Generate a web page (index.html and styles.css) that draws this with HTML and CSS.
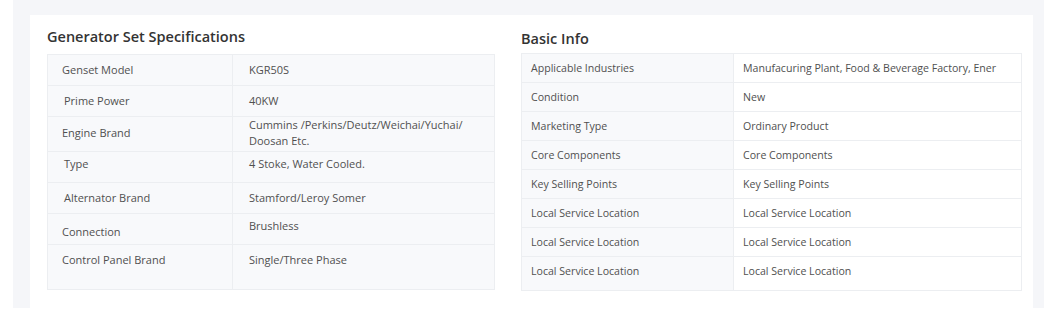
FILE: index.html
```html
<!DOCTYPE html>
<html lang="en">
<head>
    <meta charset="UTF-8">
    <meta name="viewport" content="width=device-width, initial-scale=1.0">
    <title>Product Details</title>
    <link rel="stylesheet" href="styles.css">
</head>
<body>
    <div class="page">
        <div class="card">
            <section class="specs">
                <h2>Generator Set Specifications</h2>
                <table class="spec-table">
                    <colgroup>
                        <col class="col-label">
                        <col>
                    </colgroup>
                    <tr><td>Genset Model</td><td>KGR50S</td></tr>
                    <tr><td class="nudge">Prime Power</td><td>40KW</td></tr>
                    <tr class="multi"><td>Engine Brand</td><td>Cummins /Perkins/Deutz/Weichai/Yuchai/<br>Doosan Etc.</td></tr>
                    <tr class="up"><td class="nudge">Type</td><td>4 Stoke, Water Cooled.</td></tr>
                    <tr><td class="nudge">Alternator Brand</td><td>Stamford/Leroy Somer</td></tr>
                    <tr class="split"><td class="down">Connection</td><td class="up-cell">Brushless</td></tr>
                    <tr class="last"><td>Control Panel Brand</td><td>Single/Three Phase</td></tr>
                </table>
            </section>

            <section class="basic">
                <h2>Basic Info</h2>
                <table class="info-table">
                    <colgroup>
                        <col class="col-label">
                        <col>
                    </colgroup>
                    <tr><td>Applicable Industries</td><td>Manufacuring Plant, Food &amp; Beverage Factory, Ener</td></tr>
                    <tr><td>Condition</td><td>New</td></tr>
                    <tr><td>Marketing Type</td><td>Ordinary Product</td></tr>
                    <tr><td>Core Components</td><td>Core Components</td></tr>
                    <tr><td>Key Selling Points</td><td>Key Selling Points</td></tr>
                    <tr><td>Local Service Location</td><td>Local Service Location</td></tr>
                    <tr><td>Local Service Location</td><td>Local Service Location</td></tr>
                    <tr class="last"><td>Local Service Location</td><td>Local Service Location</td></tr>
                </table>
            </section>
        </div>
    </div>
</body>
</html>
```

FILE: styles.css
```css
body {
    margin: 0;
    background-color: #fff;
    font-family: "Open Sans", Arial, sans-serif;
    color: #505050;
}
.page {
    margin-left: 13px;
    height: 308px;
    box-sizing: border-box;
    padding: 15px 11px 0 17px;
    background-color: #f5f6f9;
}
.card {
    height: 100%;
    box-sizing: border-box;
    padding: 12px 11px 18px 17px;
    background-color: #fff;
    display: grid;
    grid-template-columns: 448px 1fr;
    column-gap: 26px;
}
h2 {
    margin: 0 0 7px;
    font-size: 14.5px;
    line-height: 20px;
    font-weight: 600;
    color: #333;
}
.basic h2 {
    margin: 2px 0 4px;
}
table {
    width: 100%;
    border-collapse: collapse;
    table-layout: fixed;
    border: 1px solid #eceef1;
    font-size: 11px;
}
td {
    border: 1px solid #eceef1;
    vertical-align: middle;
    white-space: nowrap;
    overflow: hidden;
}

/* left table: all grey */
.spec-table .col-label {
    width: 185px;
}
.spec-table td {
    background-color: #f8f9fb;
    padding: 7px 16px 7px 14px;
    line-height: 16px;
}
.spec-table td + td {
    padding-left: 16px;
}
.spec-table td.nudge {
    padding-left: 16px;
}
.spec-table .multi td {
    padding-top: 0;
    padding-bottom: 2px;
}
.spec-table .up td {
    padding-top: 4px;
    padding-bottom: 10px;
}
.spec-table td.down {
    padding-top: 10px;
    padding-bottom: 4px;
}
.spec-table td.up-cell {
    padding-top: 4px;
    padding-bottom: 10px;
}
.spec-table .last td {
    height: 30px;
    vertical-align: top;
}

/* right table: grey labels, white values */
.info-table {
    font-size: 10.6px;
}
.info-table .col-label {
    width: 212px;
}
.info-table td {
    padding: 7px 9px;
    line-height: 14px;
    background-color: #fff;
}
.info-table td:first-child {
    background-color: #f8f9fb;
}
.info-table .last td {
    height: 19px;
    vertical-align: top;
}
```
